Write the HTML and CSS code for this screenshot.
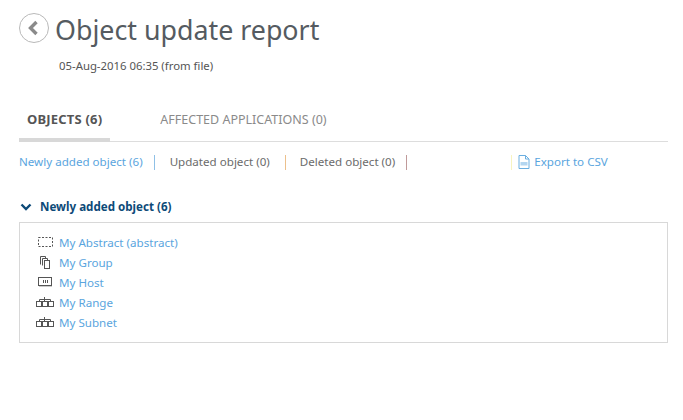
FILE: index.html
```html
<!DOCTYPE html>
<html lang="en">
<head>
<meta charset="utf-8">
<title>Object update report</title>
<link rel="stylesheet" href="styles.css">
</head>
<body>
<div class="page">
  <header class="head">
    <a class="back" href="#">
      <svg width="31" height="31" viewBox="0 0 31 31"><circle cx="15" cy="15" r="14.500" fill="#fff" stroke="#b9b9b9"/><path d="M17.500 9l-6 6 6 6" fill="none" stroke="#8a8a8a" stroke-width="3.400"/></svg>
    </a>
    <h1 class="title">Object update report</h1>
  </header>
  <p class="date">05-Aug-2016 06:35 (from file)</p>
  <nav class="tabs">
    <a class="tab active">OBJECTS (6)</a>
    <a class="tab">AFFECTED APPLICATIONS (0)</a>
  </nav>
  <div class="filters">
    <a class="filter link">Newly added object (6)</a><span class="sep blue"></span>
    <a class="filter">Updated object (0)</a><span class="sep orange"></span>
    <a class="filter">Deleted object (0)</a><span class="sep red"></span>
    <span class="sep yellow"></span>
    <a class="export">
      <svg width="12" height="14" viewBox="0 0 12 14"><path d="M1 .5h6.500l3.500 3.500v9.500h-10z" fill="#fff" stroke="#6aaee0"/><path d="M7.500 .5v3.500h3.500" fill="none" stroke="#6aaee0"/><rect x="2.500" y="7" width="7" height="3.500" fill="#b4d6f0"/></svg>
      <span>Export to CSV</span>
    </a>
  </div>
  <h2 class="section">
    <svg width="12" height="8" viewBox="0 0 12 8"><path d="M1.500 1.500l4.500 4.500 4.500-4.500" fill="none" stroke="#0d4a78" stroke-width="2.400"/></svg>
    Newly added object (6)
  </h2>
  <ul class="list">
    <li class="item"><span class="ico"><svg width="15" height="10" viewBox="0 0 15 10"><rect x=".5" y=".5" width="14" height="9" fill="none" stroke="#555" stroke-dasharray="2 1.500"/></svg></span><a>My Abstract (abstract)</a></li>
    <li class="item"><span class="ico"><svg width="12" height="14" viewBox="0 0 12 14"><path d="M1.500 9.500v-8h5v2" fill="#fff" stroke="#555"/><path d="M3.500 10.500v-7h5v2" fill="#fff" stroke="#555"/><rect x="5.500" y="5.500" width="5" height="8" fill="#fff" stroke="#555"/></svg></span><a>My Group</a></li>
    <li class="item"><span class="ico"><svg width="14" height="10" viewBox="0 0 14 10"><rect x=".5" y=".5" width="13" height="8" fill="#fff" stroke="#555"/><path d="M5.500 3v3M7.500 3v3M9.500 3v3" stroke="#555"/><path d="M1 9.500h13" stroke="#ccc"/></svg></span><a>My Host</a></li>
    <li class="item"><span class="ico"><svg width="18" height="10" viewBox="0 0 18 10"><path d="M3.500 5v-2.500h11v2.500M8.500 0v5" fill="none" stroke="#555"/><g fill="#fff" stroke="#555"><rect x=".5" y="4.500" width="5" height="5"/><rect x="6.500" y="4.500" width="5" height="5"/><rect x="12.500" y="4.500" width="5" height="5"/></g></svg></span><a>My Range</a></li>
    <li class="item"><span class="ico"><svg width="18" height="10" viewBox="0 0 18 10"><path d="M3.500 5v-2.500h11v2.500M8.500 0v5" fill="none" stroke="#555"/><g fill="#fff" stroke="#555"><rect x=".5" y="4.500" width="5" height="5"/><rect x="6.500" y="4.500" width="5" height="5"/><rect x="12.500" y="4.500" width="5" height="5"/></g></svg></span><a>My Subnet</a></li>
  </ul>
</div>
</body>
</html>
```
FILE: styles.css
```css
* { box-sizing: border-box; }
html, body { margin: 0; padding: 0; background: #fff; }
body { font-family: "Noto Sans", "Open Sans", sans-serif; color: #555; font-size: 11.600px; }
.page { width: 649px; margin-left: 19px; padding-top: 13px; }
.head { display: flex; align-items: center; gap: 5px; height: 31px; padding-top: 2px; }
.back { display: block; height: 31px; margin-top: -2px; }
.back svg { display: block; }
.title { margin: 0; font-size: 26.800px; font-weight: 400; line-height: 31px; color: #555b61; }
.date { margin: 14px 0 0 40px; font-size: 11.350px; line-height: 16px; color: #555; }
.tabs { display: flex; margin-top: 27px; height: 41px; border-bottom: 1px solid #ddd; }
.tab { display: block; height: 41px; padding: 11px 8px 0; font-size: 12.500px; line-height: 16px; color: #8a8a8a; margin-right: 42px; }
.tab.active { padding-top: 10px; font-size: 13px; letter-spacing: .2px; font-weight: 700; color: #555; border-bottom: 4px solid #d8d8d8; margin-bottom: -1px; }
.filters { display: flex; align-items: center; height: 16px; margin-top: 12px; line-height: 16px; }
.filter { color: #6b6b6b; }
.filter.link { color: #5aa5de; }
.sep { width: 1px; height: 15px; margin: 0 15px; }
.sep.blue { background: #8fc0e6; margin-left: 11px; }
.sep.orange { background: #ecc08c; margin-right: 14px; }
.sep.red { background: #c09a9a; margin: 0 0 0 11px; }
.sep.yellow { background: #f8f4c0; margin: 0 6px 0 104px; }
.export { display: flex; align-items: center; gap: 4px; color: #5aa5de; }
.section { display: flex; align-items: center; gap: 8px; margin: 29px 0 0 1px; font-size: 11.600px; font-weight: 700; line-height: 16px; color: #0d4a78; }
.list { list-style: none; margin: 7px 0 0; padding: 9px 0; border: 1px solid #d8d8d8; height: 121px; }
.item { display: flex; align-items: center; height: 20px; color: #5aa5de; }
.ico { display: flex; justify-content: center; align-items: center; width: 18px; margin: 0 5px 0 16px; }
.ico svg { display: block; }
```
